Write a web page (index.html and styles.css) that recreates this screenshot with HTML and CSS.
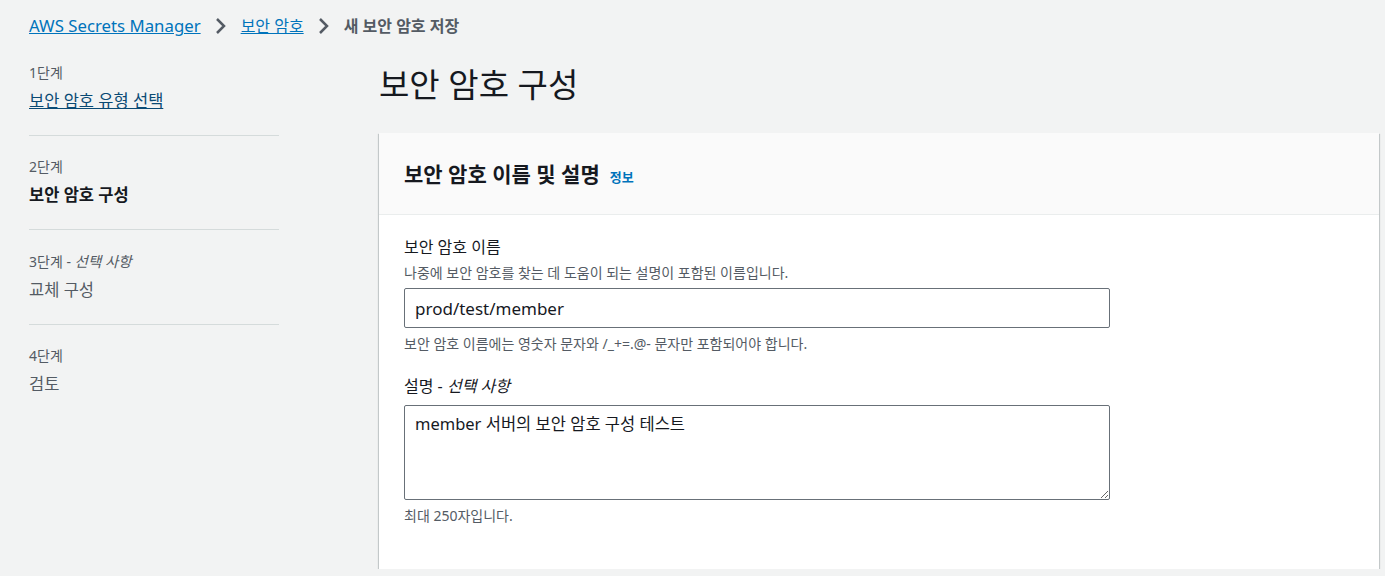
FILE: index.html
```html
<!DOCTYPE html>
<html lang="ko">
<head>
    <meta charset="UTF-8">
    <title>새 보안 암호 저장</title>
    <link rel="stylesheet" href="styles.css">
</head>
<body>

<nav class="breadcrumbs">
    <a href="#">AWS Secrets Manager</a>
    <svg class="chevron" width="14" height="18" viewBox="0 0 14 18"><path d="M3 2l7 7-7 7" fill="none" stroke="currentColor" stroke-width="2.5"/></svg>
    <a class="crumb-ko" href="#">보안 암호</a>
    <svg class="chevron" width="14" height="18" viewBox="0 0 14 18"><path d="M3 2l7 7-7 7" fill="none" stroke="currentColor" stroke-width="2.5"/></svg>
    <span class="current">새 보안 암호 저장</span>
</nav>

<div class="layout">
    <ol class="steps">
        <li class="step">
            <div class="step-number">1단계</div>
            <a class="step-name" href="#">보안 암호 유형 선택</a>
        </li>
        <li class="step">
            <div class="step-number">2단계</div>
            <div class="step-name active">보안 암호 구성</div>
        </li>
        <li class="step">
            <div class="step-number">3단계 - <i>선택 사항</i></div>
            <div class="step-name">교체 구성</div>
        </li>
        <li class="step">
            <div class="step-number">4단계</div>
            <div class="step-name">검토</div>
        </li>
    </ol>

    <main class="main">
        <h1 class="page-title">보안 암호 구성</h1>

        <section class="panel">
            <header class="panel-header">
                <h2>보안 암호 이름 및 설명</h2>
                <a class="info" href="#">정보</a>
            </header>
            <div class="panel-body">
                <div class="field">
                    <label class="label" for="name">보안 암호 이름</label>
                    <div class="description">나중에 보안 암호를 찾는 데 도움이 되는 설명이 포함된 이름입니다.</div>
                    <input class="input" id="name" type="text" value="prod/test/member">
                    <div class="hint">보안 암호 이름에는 영숫자 문자와 /_+=.@- 문자만 포함되어야 합니다.</div>
                </div>
                <div class="field">
                    <label class="label label-spaced" for="desc">설명 - <i>선택 사항</i></label>
                    <textarea class="input textarea" id="desc">member 서버의 보안 암호 구성 테스트</textarea>
                    <div class="hint">최대 250자입니다.</div>
                </div>
            </div>
        </section>
    </main>
</div>

</body>
</html>
```

FILE: styles.css
```css
html
{
    font-family: "Noto Sans", "Noto Sans CJK KR", sans-serif;
    color: #16191f;
}

body
{
    margin: 0;
    background: #f2f3f3;
}

a
{
    color: #0073bb;
}

.breadcrumbs
{
    display: flex;
    align-items: center;
    gap: 13px;
    padding: 15px 0 0 29px;
    font-size: 16.8px;
    line-height: 22px;
}

.crumb-ko
{
    font-size: 16px;
}

.chevron
{
    color: #545b64;
}

.current
{
    color: #545b64;
    font-weight: bold;
    font-size: 16px;
}

.layout
{
    display: grid;
    grid-template-columns: 250px 1000px;
    column-gap: 100px;
    align-items: start;
    padding: 0 0 0 29px;
    margin-top: 26px;
}

.steps
{
    list-style: none;
    margin: 0;
    padding: 0;
}

.step
{
    padding: 0 0 23px;
    margin-bottom: 21px;
    border-bottom: 1px solid #d5dbdb;
}

.step:last-child
{
    border-bottom: none;
}

.step-number
{
    font-size: 14px;
    line-height: 20px;
    color: #545b64;
    margin-bottom: 7px;
}

.step-number i
{
    font-size: 14.5px;
}

.step-name
{
    display: inline-block;
    font-size: 16.5px;
    line-height: 22px;
    color: #545b64;
}

a.step-name
{
    color: #0a4a74;
}

.step-name.active
{
    color: #16191f;
    font-weight: bold;
}

.page-title
{
    margin: 0 0 26px;
    font-size: 33px;
    line-height: 44px;
    font-weight: normal;
}

.panel
{
    background: #fff;
    box-shadow: 0 1px 1px 0 rgba(0, 28, 36, 0.3), 1px 1px 1px 0 rgba(0, 28, 36, 0.15), -1px 1px 1px 0 rgba(0, 28, 36, 0.15);
}

.panel-header
{
    display: flex;
    align-items: baseline;
    gap: 10px;
    padding: 27px 25px 26px;
    background: #fafafa;
    border-bottom: 1px solid #eaeded;
}

.panel-header h2
{
    margin: 0;
    font-size: 21px;
    line-height: 28px;
}

.info
{
    font-size: 13px;
    font-weight: bold;
    text-decoration: none;
}

.panel-body
{
    padding: 21px 25px 44px;
}

.label
{
    display: block;
    font-size: 16px;
    line-height: 22px;
}

.label-spaced
{
    margin-bottom: 8px;
}

.description, .hint
{
    font-size: 14px;
    line-height: 18px;
    color: #545b64;
}

.description
{
    margin: 6px 0 6px;
}

.hint
{
    margin-top: 7px;
}

.field + .field
{
    margin-top: 22px;
}

.input
{
    display: block;
    box-sizing: border-box;
    width: 706px;
    height: 40px;
    margin: 0;
    padding: 0 10px;
    border: 1px solid #687078;
    border-radius: 2px;
    font: inherit;
    font-size: 17px;
    color: #16191f;
    background: #fff;
}

.textarea
{
    height: 95px;
    padding: 7px 10px;
    font-size: 16.5px;
    line-height: 22px;
}
```
